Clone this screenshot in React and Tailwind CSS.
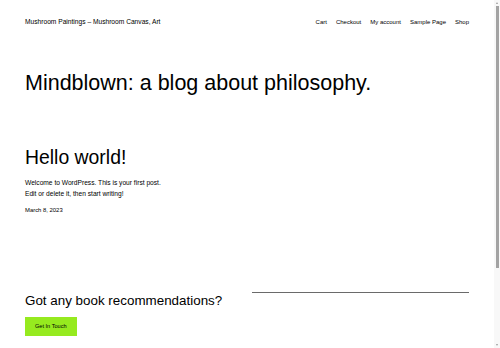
export default function App() {
  const font = { fontFamily: '"Liberation Sans", Arial, sans-serif' };
  return (
    <div className="relative h-[348px] w-[500px] overflow-hidden bg-white text-black" style={font}>
      <div className="w-[494px] px-[25px]">
        <header className="flex items-center justify-between pt-[17px]">
          <div className="text-[6.65px] leading-[10px]">Mushroom Paintings – Mushroom Canvas, Art</div>
          <nav className="flex items-center gap-[9px] text-[6px] leading-[10px]">
            <span>Cart</span>
            <span>Checkout</span>
            <span>My account</span>
            <span>Sample Page</span>
            <span>Shop</span>
          </nav>
        </header>

        <h1 className="mt-[43px] text-[21.5px] leading-[26px] font-normal">
          Mindblown: a blog about philosophy.
        </h1>

        <h2 className="mt-[49px] text-[19.4px] leading-[24px] font-normal">Hello world!</h2>
        <p className="mt-[7.7px] text-[6.65px] leading-[11px]">
          Welcome to WordPress. This is your first post.
          <br />
          Edit or delete it, then start writing!
        </p>
        <div className="mt-[7.7px] text-[5.9px] leading-[9px]">March 8, 2023</div>

        <div className="mt-[77px] grid grid-cols-2 gap-[9px]">
          <div>
            <h3 className="text-[13.4px] leading-[17px] font-normal">Got any book recommendations?</h3>
            <div className="mt-[8px] flex">
              <div className="flex h-[19px] items-center bg-[#96ea1f] px-[10px] text-[5.6px] leading-none">
                Get In Touch
              </div>
            </div>
          </div>
          <div>
            <div className="h-px bg-[#6a6a6a]" />
          </div>
        </div>
      </div>

      {/* scrollbar overlay */}
      <div className="absolute right-0 top-0 flex h-[348px] w-[6px] flex-col items-center bg-[#f8f8f8]">
        <div className="mt-[2px] h-0 w-0 border-x-[1.5px] border-b-[2px] border-x-transparent border-b-[#9a9a9a]" />
        <div className="mt-[2px] h-[262px] w-[3px] bg-[#a3a3a3]" />
        <div className="mt-auto mb-[2px] h-0 w-0 border-x-[1.5px] border-t-[2px] border-x-transparent border-t-[#9a9a9a]" />
      </div>
    </div>
  );
}
